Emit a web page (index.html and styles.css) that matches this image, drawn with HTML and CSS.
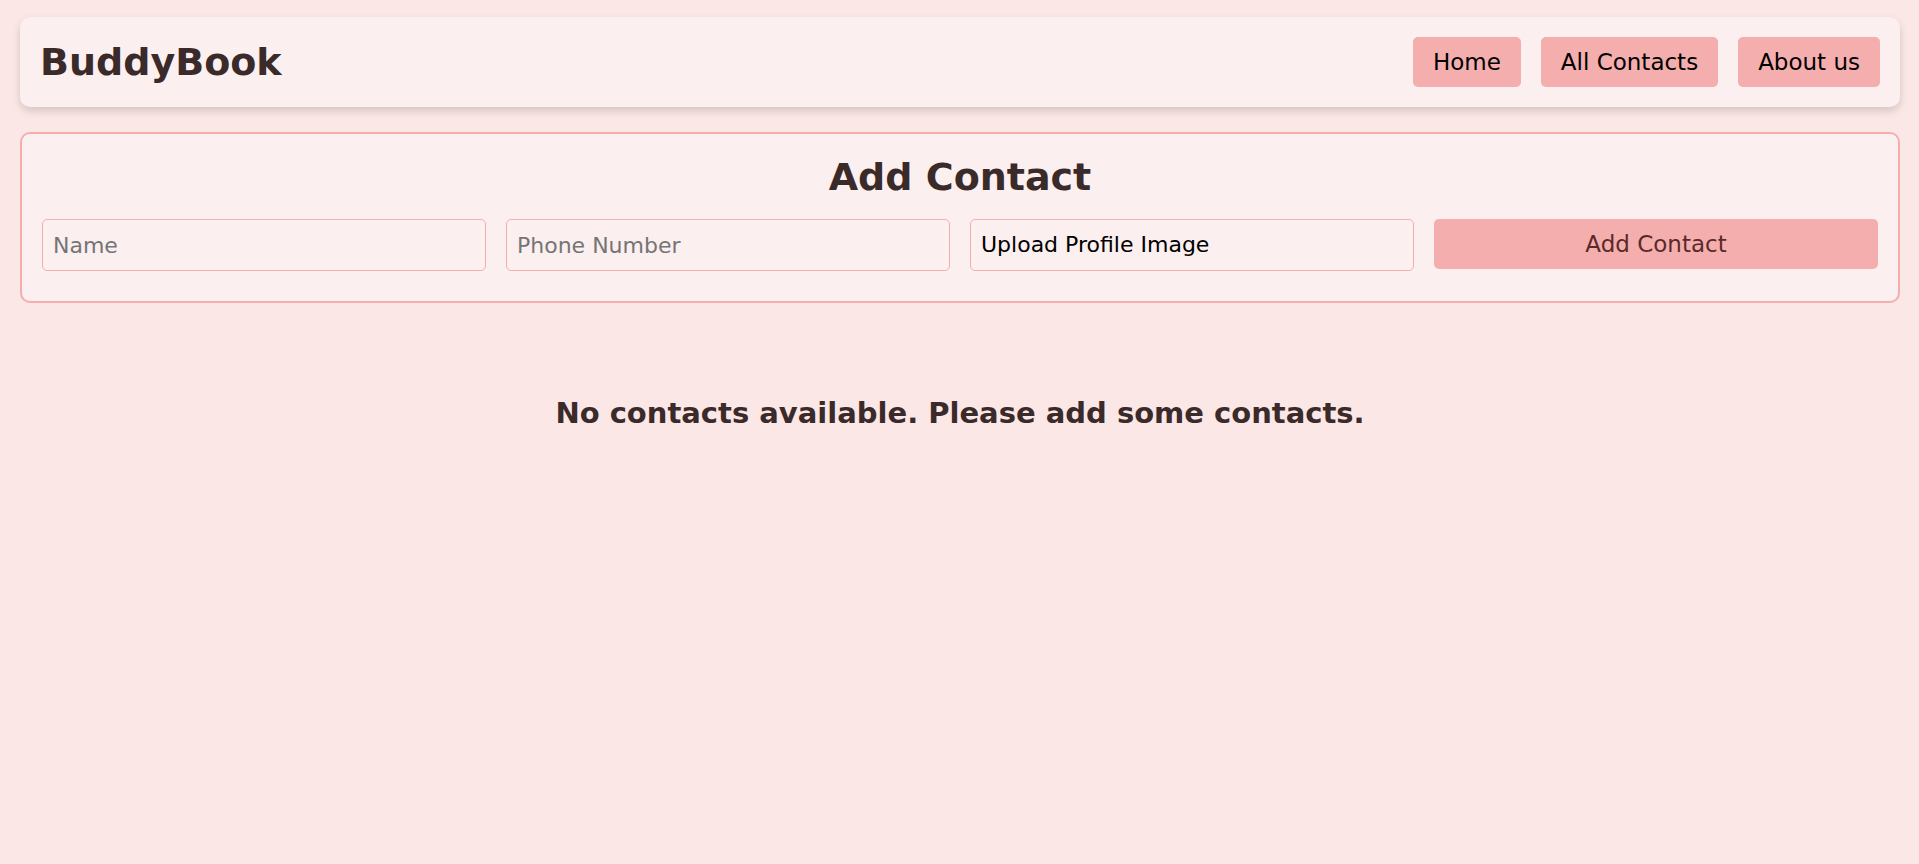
FILE: index.html
```
<!DOCTYPE html>
<html lang="en">
<head>
    <meta charset="UTF-8">
    <meta name="viewport" content="width=device-width, initial-scale=1.0">
    <title>BuddyBook</title>
    <link rel="stylesheet" href="styles.css">
</head>
<body>
    <header class="navbar">
        <h1 class="logo">BuddyBook</h1>
        <nav class="nav-links">
            <a href="#">Home</a>
            <a href="#contacts">All Contacts</a>
            <a href="#about">About us</a>
        </nav>
    </header>

    <main>
        <section class="form-container">
            <h2>Add Contact</h2>
            <form class="contact-form">
                <input class="field" type="text" id="name" placeholder="Name" aria-label="Name">
                <input class="field" type="tel" id="phone" placeholder="Phone Number" aria-label="Phone Number">
                <label class="field upload" for="image">Upload Profile Image
                    <input type="file" id="image" accept="image/*">
                </label>
                <button type="submit">Add Contact</button>
            </form>
        </section>

        <section id="contacts" class="contacts">
            <h2>No contacts available. Please add some contacts.</h2>
        </section>
    </main>
</body>
</html>
```
FILE: styles.css
```
* {
    box-sizing: border-box;
    margin: 0;
    padding: 0;
}

body {
    font-family: "DejaVu Sans", Verdana, sans-serif;
    font-size: 22px;
    background-color: #fbe7e5;
    color: #3a2a2a;
    padding: 17px 19px 17px 20px;
}

.navbar {
    display: flex;
    justify-content: space-between;
    align-items: center;
    padding: 20px;
    margin-bottom: 25px;
    background-color: #fbefef;
    border-radius: 10px;
    box-shadow: 0 4px 8px rgba(0, 0, 0, 0.15);
}

.logo {
    font-size: 38px;
    line-height: 50px;
}

.nav-links {
    display: flex;
    gap: 20px;
}

.nav-links a {
    padding: 0 20px;
    font-size: 23px;
    line-height: 50px;
    color: #000;
    background-color: #f5aeae;
    border-radius: 5px;
    text-decoration: none;
}

.form-container {
    padding: 20px 20px 30px;
    background-color: #fbefef;
    border: 2px solid #f5aeae;
    border-radius: 10px;
}

.form-container h2 {
    margin-bottom: 18px;
    font-size: 38px;
    line-height: 47px;
    text-align: center;
}

.contact-form {
    display: grid;
    grid-template-columns: repeat(4, 1fr);
    gap: 20px;
    align-items: start;
}

.field {
    width: 100%;
    height: 52px;
    padding: 0 10px;
    font-family: inherit;
    font-size: 22px;
    line-height: 50px;
    color: #000;
    background-color: #fbefef;
    border: 1px solid #f5aeae;
    border-radius: 5px;
}

.field::placeholder {
    color: #757575;
}

.upload {
    cursor: pointer;
}

.upload input {
    display: none;
}

button {
    height: 50px;
    font-family: inherit;
    font-size: 23px;
    color: #5a2a2a;
    background-color: #f5aeae;
    border: none;
    border-radius: 5px;
    cursor: pointer;
}

.contacts {
    padding: 90px 0;
    text-align: center;
}

.contacts h2 {
    font-size: 29px;
    line-height: 40px;
}
```
